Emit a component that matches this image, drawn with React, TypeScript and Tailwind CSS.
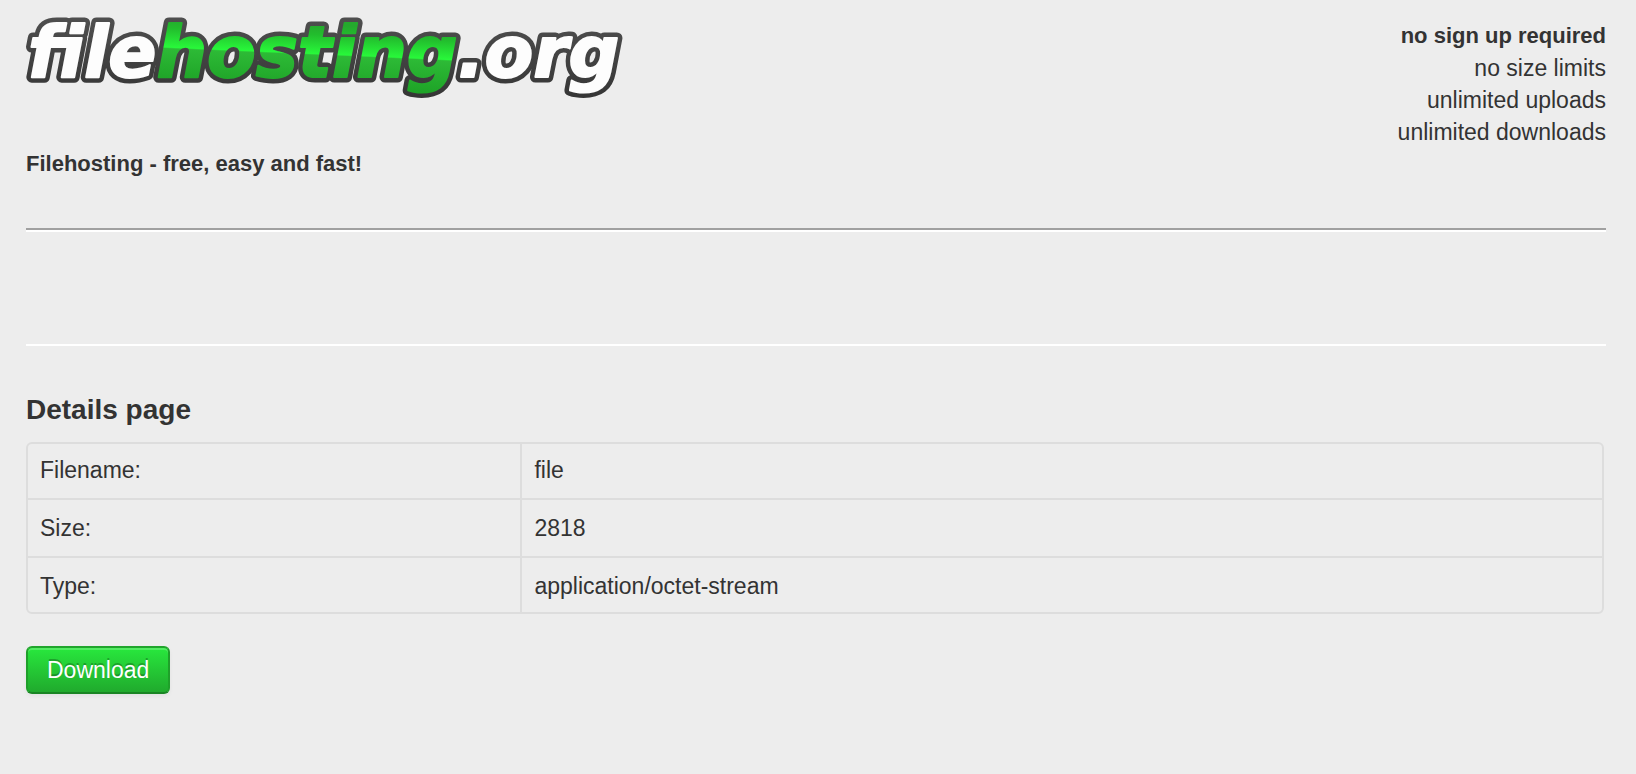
const details = [
  { label: "Filename:", value: "file", pad: "pt-2 pb-[10px]" },
  { label: "Size:", value: "2818", pad: "pt-[10px] pb-[10px]" },
  { label: "Type:", value: "application/octet-stream", pad: "pt-[10px] pb-2" },
];

function Logo() {
  return (
    <svg
      width="600"
      height="76"
      viewBox="0 0 600 76"
      className="overflow-visible"
      role="img"
      aria-label="filehosting.org"
    >
      <defs>
        <linearGradient id="green" gradientUnits="userSpaceOnUse" x1="280" y1="4" x2="277" y2="72">
          <stop offset="0" stopColor="#25a92d" />
          <stop offset="0.15" stopColor="#22bd2d" />
          <stop offset="0.43" stopColor="#28f83a" />
          <stop offset="0.45" stopColor="#2dba36" />
          <stop offset="1" stopColor="#1ca025" />
        </linearGradient>
        <linearGradient id="edge" gradientUnits="userSpaceOnUse" x1="0" y1="0" x2="0" y2="76">
          <stop offset="0" stopColor="#4e4e4e" />
          <stop offset="1" stopColor="#363636" />
        </linearGradient>
      </defs>
      <use href="#wordmark" className="[--outline-width:11px] [--outline:url(#edge)]" />
      <text
        id="wordmark"
        x="2"
        y="57"
        strokeLinejoin="round"
        className="font-['DejaVu_Sans'] text-[71px] font-bold italic [stroke-width:var(--outline-width,2px)]"
      >
        <tspan fill="#fdfdfd" className="[stroke:var(--outline,#fdfdfd)]">file</tspan>
        <tspan fill="url(#green)" className="[stroke:var(--outline,url(#green))]">hosting</tspan>
        <tspan fill="#fdfdfd" className="[stroke:var(--outline,#fdfdfd)]">.org</tspan>
      </text>
    </svg>
  );
}

export default function App() {
  return (
    <div className="min-h-screen bg-[#ededed] pt-5 pr-[30px] pb-20 pl-[26px] font-['Liberation_Sans',Arial,sans-serif] text-[23px] leading-8 text-[#333]">
      <header className="flex items-start justify-between">
        <div>
          <a href="#" className="block">
            <Logo />
          </a>
          <p className="mt-[52px] text-[22px] leading-8 font-bold">Filehosting - free, easy and fast!</p>
        </div>
        <ul className="text-right">
          <li className="text-[22px] leading-8 font-bold">no sign up required</li>
          <li>no size limits</li>
          <li>unlimited uploads</li>
          <li>unlimited downloads</li>
        </ul>
      </header>

      <hr className="mt-12 h-1 border-t-2 border-b-2 border-t-[#a0a0a0] border-b-white" />
      <hr className="mt-28 border-t-2 border-white" />

      <main className="mt-12 pr-0.5">
        <h1 className="text-[28px] leading-8 font-bold">Details page</h1>
        <div className="mt-4 overflow-hidden rounded-md border-2 border-[#dddddd]">
          <table className="w-full table-fixed border-collapse text-left leading-9">
            <colgroup>
              <col className="w-[31.35%]" />
              <col />
            </colgroup>
            <tbody className="divide-y-2 divide-[#dddddd]">
              {details.map((row) => (
                <tr key={row.label} className="border-[#dddddd]">
                  <th scope="row" className={`${row.pad} px-3 font-normal`}>
                    {row.label}
                  </th>
                  <td className={`${row.pad} border-l-2 border-[#dddddd] px-3`}>{row.value}</td>
                </tr>
              ))}
            </tbody>
          </table>
        </div>
        <button
          type="button"
          className="mt-8 block h-12 rounded-md border-2 border-t-[#20a52c] border-x-[#1fa02a] border-b-[#1a8524] bg-linear-to-b from-[#28e83d] to-[#20aa2d] px-[19px] leading-8 text-white shadow-[inset_0_2px_0_rgba(255,255,255,0.2),0_2px_4px_rgba(0,0,0,0.05)] [text-shadow:0_-2px_0_rgba(0,0,0,0.25)]"
        >
          Download
        </button>
      </main>
    </div>
  );
}
